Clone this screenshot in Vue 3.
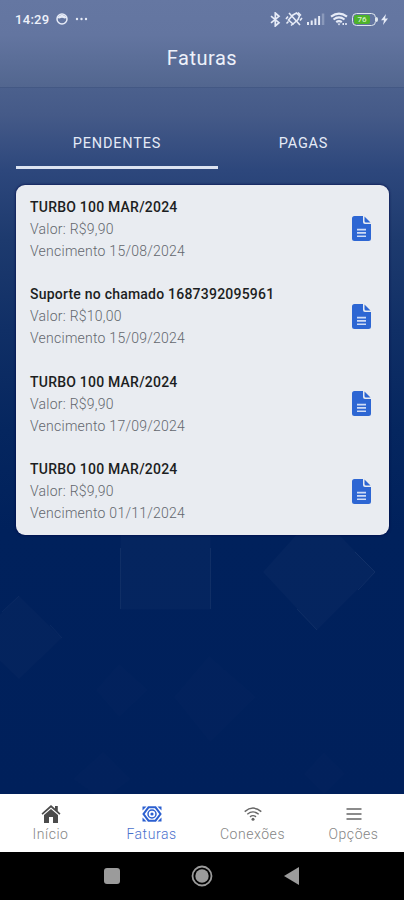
<script setup>
import { ref } from 'vue'

const tab = ref('pendentes')
const page = ref('faturas')

const tabs = [
  { id: 'pendentes', label: 'PENDENTES' },
  { id: 'pagas', label: 'PAGAS' },
]

const faturas = [
  { id: 1, titulo: 'TURBO 100 MAR/2024', valor: '9,90', vencimento: '15/08/2024' },
  { id: 2, titulo: 'Suporte no chamado 1687392095961', valor: '10,00', vencimento: '15/09/2024' },
  { id: 3, titulo: 'TURBO 100 MAR/2024', valor: '9,90', vencimento: '17/09/2024' },
  { id: 4, titulo: 'TURBO 100 MAR/2024', valor: '9,90', vencimento: '01/11/2024' },
]

const menu = [
  { id: 'inicio', label: 'Início' },
  { id: 'faturas', label: 'Faturas' },
  { id: 'conexoes', label: 'Conexões' },
  { id: 'opcoes', label: 'Opções' },
]
</script>

<template>
  <div class="screen">
    <!-- faint squares in the background -->
    <svg class="shapes" viewBox="0 0 404 900" fill="#fff">
      <g fill-opacity="0.02">
        <path d="M120.500 530V609.500H210.500V530z" />
        <path d="M317 512L375 572L317 630L263 572z" />
        <path d="M19 596L62 638L19 679L-24 638z" fill-opacity="0.014" />
      </g>
      <g fill="none" stroke="#fff" stroke-opacity="0.06">
        <path d="M120.500 548V609M210.500 548V609" />
        <path d="M355 552L375 572L358 590M297 609L317 630" />
        <path d="M2 612L19 596M50 625L62 638" stroke-opacity="0.04" />
      </g>
      <g fill-opacity="0.008">
        <path d="M119 664L148 690L119 717L96 690z" />
        <path d="M209 656L256 697L210 742L174 697z" />
        <path d="M103 752L131 779L103 800L73 779z" />
        <path d="M324 752L345 774L324 794L304 774z" />
      </g>
    </svg>

    <header class="header">
      <div class="status">
        <div class="status-left">
          <span class="time">14:29</span>
          <svg class="face" width="12" height="12" viewBox="0 0 12 12">
            <circle cx="6" cy="6" r="5" fill="none" stroke="#e6ebf7" stroke-width="1.500" />
            <path d="M1.200 5Q6 -1.500 10.800 5L8.500 5.600Q6 4 3.500 5.600z" fill="#e6ebf7" />
          </svg>
          <svg width="13" height="4" viewBox="0 0 13 4" fill="#e6ebf7">
            <circle cx="2" cy="2" r="1.200" /><circle cx="6.500" cy="2" r="1.200" /><circle cx="11" cy="2" r="1.200" />
          </svg>
        </div>
        <div class="status-right">
          <svg width="11" height="15" viewBox="0 0 11 15" fill="none" stroke="#e6ebf7" stroke-width="1.700">
            <path d="M1 4.200L9 10.700L5.300 14V1L9 4.300L1 10.800" />
          </svg>
          <svg class="mute" width="18" height="16" viewBox="0 0 18 16" fill="none" stroke="#e6ebf7" stroke-width="1.600">
            <path d="M3.500 9L8 4L11.500 2L14.500 5L13 8.500L8 13z" />
            <path d="M4 2L15 14M1 8L3 5.500M15 9.500L17 7M6 14.500L8.500 12.500M1.500 12.500L3.500 10.500M13 1.500L16 4.500" />
          </svg>
          <svg class="signal" width="18" height="12" viewBox="0 0 18 12" fill="#e6ebf7">
            <path d="M0 9h2v3H0zM3.700 7.500h2V12h-2zM7.400 5.500h2V12h-2zM11.100 3h2v9h-2z" />
            <path d="M14.800 0.500h2.500V12h-2.500z" opacity="0.300" />
          </svg>
          <svg class="wifi" width="18" height="14" viewBox="0 0 18 14" fill="none" stroke="#e6ebf7" stroke-width="2.100">
            <path d="M1 4.600Q9 -1.500 17 4.600M3.500 7.500Q9 3.300 14.500 7.500M6.200 10.200Q9 8 11.800 10.200" />
            <path d="M7.500 11.500h3L9 13.500z" fill="#e6ebf7" stroke="none" />
            <path d="M12.500 12h1.500M15.200 12h1.600" stroke-width="2" />
          </svg>
          <div class="battery"><span class="battery-level">76</span></div>
          <svg width="7" height="11" viewBox="0 0 7 11" fill="#e6ebf7"><path d="M5 0L0 6.200H3L2 11L7 4.600H4z" /></svg>
        </div>
      </div>
      <h1 class="title">Faturas</h1>
    </header>

    <main class="content">
      <div class="tabs">
        <button
          v-for="t in tabs"
          :key="t.id"
          type="button"
          class="tab"
          :class="{ active: tab === t.id }"
          @click="tab = t.id"
        >
          {{ t.label }}
        </button>
      </div>

      <div class="card">
        <div v-for="f in faturas" :key="f.id" class="fatura">
          <div class="fatura-info">
            <div class="fatura-title">{{ f.titulo }}</div>
            <div class="fatura-line">Valor: R${{ f.valor }}</div>
            <div class="fatura-line">Vencimento {{ f.vencimento }}</div>
          </div>
          <svg width="19" height="25" viewBox="0 0 19 25">
            <path d="M2.500 0H11V6Q11 8 13 8H19V22.500Q19 25 16.500 25H2.500Q0 25 0 22.500V2.500Q0 0 2.500 0z" fill="#2d66d3" />
            <path d="M12.500 0.500L18.500 6.500H14Q12.500 6.500 12.500 5z" fill="#2d66d3" />
            <path d="M5 13.600H14M5 16.900H14M5 20.200H14" stroke="#cfdcf6" stroke-width="1.600" />
          </svg>
        </div>
      </div>
    </main>

    <nav class="bottom-nav">
      <button
        v-for="m in menu"
        :key="m.id"
        type="button"
        class="nav-item"
        :class="{ active: page === m.id }"
        @click="page = m.id"
      >
        <svg v-if="m.id === 'inicio'" width="20" height="18" viewBox="0 0 20 18" fill="#4b4b4b">
          <path d="M10 0L0.500 8.500L1.600 9.700L10 2.400L18.400 9.700L19.500 8.500L16.800 6V1H14V3.500z" />
          <path d="M10 4L3 10V18H8V12H12V18H17V10z" />
        </svg>
        <svg v-else-if="m.id === 'faturas'" width="20" height="16" viewBox="0 0 20 16" fill="none" stroke="#2b5fd0">
          <path d="M0.500 0.500H4.500L0.500 4.500zM19.500 0.500H15.500L19.500 4.500zM0.500 15.500H4.500L0.500 11.500zM19.500 15.500H15.500L19.500 11.500z" fill="#2b5fd0" stroke="none" />
          <path d="M6.500 1.300H13.500L18.500 8L13.500 14.700H6.500L1.500 8z" stroke-width="2" />
          <circle cx="10" cy="8" r="4" stroke-width="1.500" />
          <circle cx="10" cy="8" r="1.600" fill="#2b5fd0" stroke="none" />
        </svg>
        <svg v-else-if="m.id === 'conexoes'" width="18" height="14" viewBox="0 0 18 14" fill="none" stroke="#666" stroke-width="1.400">
          <path d="M0.700 4.600Q9 -2.400 17.300 4.600M3.300 7.200Q9 2.600 14.700 7.200M6 9.900Q9 7.400 12 9.900" />
          <circle cx="9" cy="12.200" r="1.500" fill="#666" stroke="none" />
        </svg>
        <svg v-else width="16" height="12" viewBox="0 0 16 12" stroke="#666" stroke-width="1.500">
          <path d="M0.500 1H15.500M0.500 6H15.500M0.500 11H15.500" />
        </svg>
        <span class="nav-label">{{ m.label }}</span>
      </button>
    </nav>

    <div class="android-bar">
      <span class="recents"></span>
      <svg class="home" width="22" height="22" viewBox="0 0 22 22">
        <circle cx="11" cy="11" r="9.500" fill="none" stroke="#9b9b9b" stroke-width="1.800" />
        <circle cx="11" cy="11" r="6.700" fill="#9b9b9b" />
      </svg>
      <svg width="15" height="18" viewBox="0 0 15 18" fill="#9b9b9b"><path d="M15 0V18L0 9z" /></svg>
    </div>
  </div>
</template>

<style>
body {
  margin: 0;
  background: #00205b;
}
</style>

<style scoped>
.screen {
  position: relative;
  display: flex;
  flex-direction: column;
  width: 100%;
  height: 900px;
  overflow: hidden;
  background: linear-gradient(180deg, #4b608d 87px, #455a88 115px, #2d477c 170px, #1d3a6e 240px, #102f66 330px, #05265f 430px, #00215c 530px, #00205b 795px);
  font-family: Roboto, "Liberation Sans", sans-serif;
}

button {
  border: none;
  background: none;
  padding: 0;
  font-family: inherit;
  cursor: pointer;
}

.shapes {
  position: absolute;
  inset: 0;
  width: 404px;
  height: 900px;
}

.header {
  position: relative;
  height: 88px;
  box-sizing: border-box;
  background: linear-gradient(180deg, #6577a2 0, #6375a0 35px, #52668f 87px);
  border-bottom: 1px solid #435884;
  color: #eef1fa;
}

.status {
  display: flex;
  align-items: center;
  justify-content: space-between;
  height: 38px;
  padding: 0 16px 0 15px;
}
.status-left, .status-right {
  display: flex;
  align-items: center;
}
.time { font-size: 13px; font-weight: 500; letter-spacing: 0.3px; }
.face { margin: 0 7px; }
.mute { margin: 0 4px; }
.wifi { margin: 0 4px 0 5px; }
.battery {
  position: relative;
  box-sizing: border-box;
  width: 24px;
  height: 13px;
  padding: 1px;
  margin-right: 5px;
  border: 1.500px solid #dfe7ee;
  border-radius: 4.500px;
}
.battery::after {
  content: '';
  position: absolute;
  top: 3px;
  right: -3px;
  width: 2px;
  height: 5px;
  border-radius: 0 2px 2px 0;
  background: #dfe7ee;
}
.battery-level {
  display: block;
  width: 16px;
  height: 9px;
  border-radius: 2px;
  background: #4eb32b;
  color: #d6efca;
  font-size: 8px;
  line-height: 9px;
  font-weight: 500;
  text-align: center;
}

.title {
  margin: 8px 0 0;
  font-size: 20px;
  line-height: 24px;
  font-weight: 400;
  letter-spacing: 0.5px;
  text-align: center;
}

.content {
  position: relative;
  flex: 1;
  padding: 31px 15px 0 16px;
}

.tabs {
  display: grid;
  grid-template-columns: 202px 171px;
  height: 50px;
  margin-bottom: 16px;
}
.tab {
  box-sizing: border-box;
  padding-top: 1px;
  border-bottom: 3px solid transparent;
  color: #e5ebf7;
  font-size: 14.500px;
  font-weight: 400;
  letter-spacing: 0.8px;
}
.tab.active { border-bottom-color: #dce3f1; }

.card {
  height: 350px;
  border-radius: 9px;
  background: #e9ecf1;
  box-shadow: 0 0 2px 1px rgba(0, 8, 70, 0.5);
}
.fatura {
  display: flex;
  align-items: center;
  justify-content: space-between;
  height: 87.500px;
  box-sizing: border-box;
  padding: 0 18px 0 14px;
}
.fatura-title {
  color: #1c1e22;
  font-size: 14px;
  line-height: 22px;
  font-weight: 500;
  letter-spacing: 0.22px;
}
.fatura-line {
  color: #63676e;
  font-size: 14px;
  line-height: 22px;
  font-weight: 300;
  letter-spacing: 0.25px;
}

.bottom-nav {
  position: relative;
  display: grid;
  grid-template-columns: repeat(4, 1fr);
  height: 58px;
  background: #fff;
}
.nav-item {
  display: grid;
  grid-template-rows: 18px 20px;
  row-gap: 1px;
  align-content: start;
  place-items: center;
  padding-top: 11px;
  color: #858585;
}
.nav-label {
  font-size: 14px;
  line-height: 20px;
  letter-spacing: 0.55px;
  font-weight: 300;
}
.nav-item.active { color: #4a70cc; }

.android-bar {
  position: relative;
  display: flex;
  align-items: center;
  height: 48px;
  box-sizing: border-box;
  padding-left: 104px;
  background: #000;
}
.recents {
  width: 16px;
  height: 16px;
  border-radius: 3px;
  background: #9b9b9b;
}
.home { margin: 0 71px; }
</style>
